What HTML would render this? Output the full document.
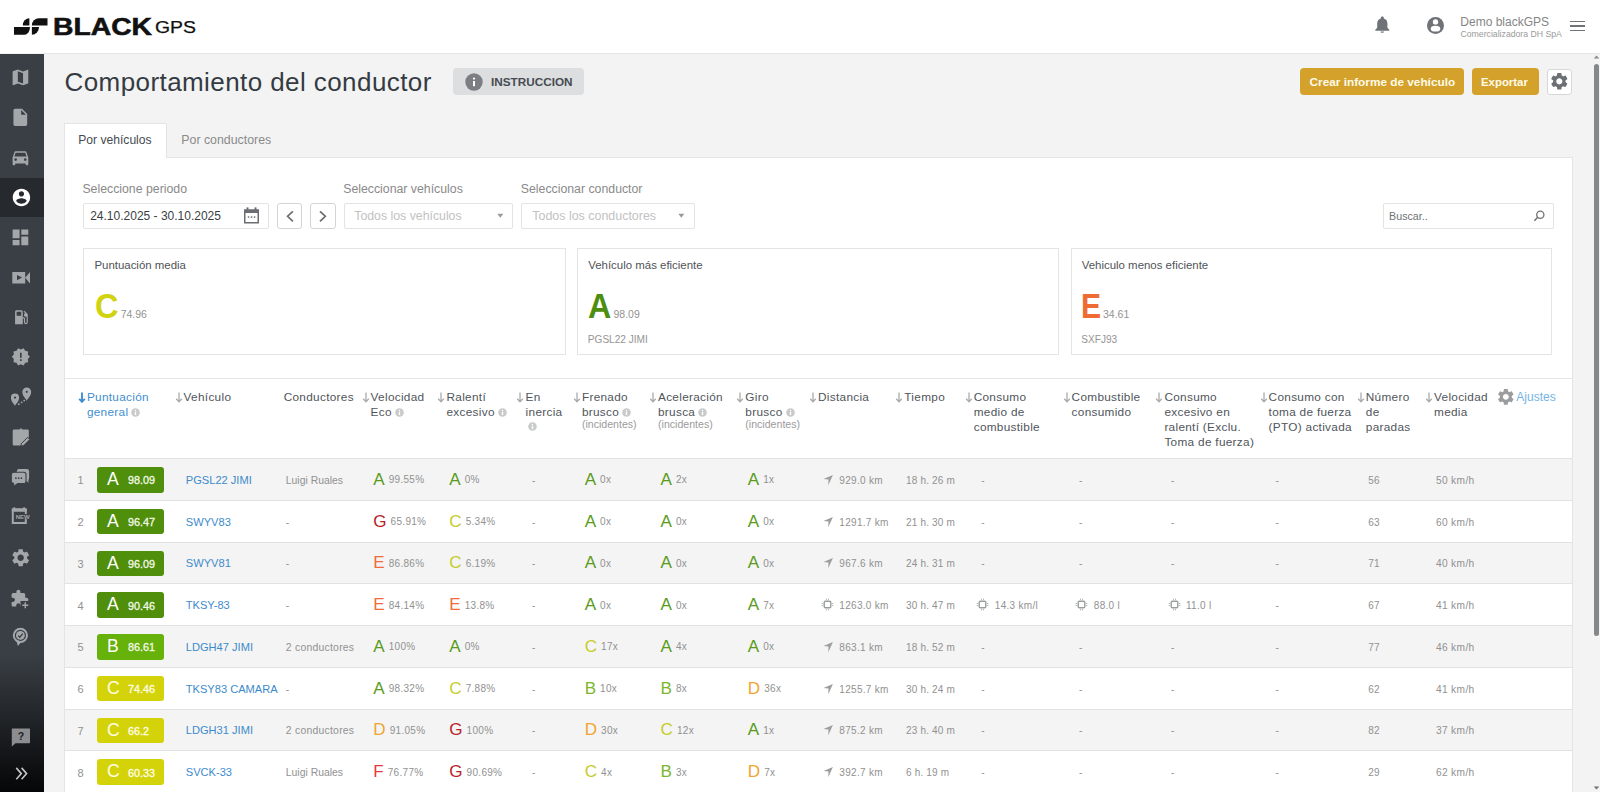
<!DOCTYPE html>
<html><head><meta charset="utf-8"><title>Comportamiento del conductor</title><style>
*{margin:0;padding:0}
html,body{width:1600px;height:792px;overflow:hidden;background:#f3f3f3;font-family:"Liberation Sans", sans-serif;}
.r{position:absolute;display:block}
.t{position:absolute;white-space:nowrap;line-height:20px;height:20px;font-family:"Liberation Sans", sans-serif;}
.ii{display:inline-block;vertical-align:baseline;margin-left:3px;position:relative;top:0.5px}
</style></head>
<body>
<div class="r" style="left:0.00px;top:0.00px;width:1600.00px;height:53.00px;background:#fff;"></div>
<div class="r" style="left:44.00px;top:53.00px;width:1556.00px;height:1.00px;background:#e6e6e6;"></div>
<svg class="r" style="left:0.00px;top:0.00px;" width="60" height="50" viewBox="0 0 60 50"><g fill="#111"><path d="M22.8 25.4 A6.6 7.15 0 0 1 29.4 18.25 L29.4 25.4 Z"/><path d="M14 27 L30 27 A5.6 7.8 0 0 1 24.4 34.8 L14 34.8 Z"/><path d="M31.9 25.4 A7.1 7.15 0 0 1 39 18.25 L47.5 18.25 L47.5 25.4 Z"/><path d="M31.9 27 L39 27 A7.1 7.8 0 0 1 31.9 34.8 Z"/></g></svg>
<svg class="r" style="left:50.00px;top:10.00px;" width="150" height="30" viewBox="0 0 150 30"><text x="3" y="24.8" font-family="Liberation Sans" font-weight="bold" font-size="23.4" fill="#111" stroke="#111" stroke-width="0.55" textLength="99" lengthAdjust="spacingAndGlyphs">BLACK</text><text x="105" y="22.9" font-family="Liberation Sans" font-size="16" fill="#111" stroke="#111" stroke-width="0.25" textLength="41" lengthAdjust="spacingAndGlyphs">GPS</text></svg>
<svg class="r" style="left:1375.00px;top:16.40px;" width="15" height="17" viewBox="0 0 15 17"><path fill="#6f7276" d="M7.1 0.5c-0.8 0-1.3 0.6-1.3 1.3v0.6C3.4 3.0 2.2 5.0 2.2 7.5v4.3L0.3 13.7v1h14v-1l-1.9-1.9V7.5c0-2.5-1.2-4.5-3.6-5.1V1.8c0-0.7-0.5-1.3-1.3-1.3zM5.5 15.4c0 0.9 0.8 1.3 1.8 1.3s1.8-0.4 1.8-1.3z"/></svg>
<svg class="r" style="left:1427.00px;top:16.70px;" width="17" height="17" viewBox="0 0 17 17"><circle cx="8.5" cy="8.5" r="8.5" fill="#6f7276"/><circle cx="8.5" cy="4.9" r="2.7" fill="#fff"/><ellipse cx="8.5" cy="11.7" rx="4.8" ry="2.9" fill="#fff"/></svg>
<div class="t" style="left:1460.30px;top:11.54px;font-size:12px;color:#858585;">Demo blackGPS</div>
<div class="t" style="left:1460.50px;top:23.78px;font-size:8.7px;color:#9a9a9a;">Comercializadora DH SpA</div>
<div class="r" style="left:1570.00px;top:20.80px;width:15.00px;height:1.50px;background:#6f7276;"></div>
<div class="r" style="left:1570.00px;top:25.30px;width:15.00px;height:1.50px;background:#6f7276;"></div>
<div class="r" style="left:1570.00px;top:29.80px;width:15.00px;height:1.50px;background:#6f7276;"></div>
<div class="r" style="left:0.00px;top:54.00px;width:44.00px;height:738.00px;background:linear-gradient(to bottom,#3a3f45 0px,#3a3f45 600px,#050607 738px);"></div>
<div class="r" style="left:0.00px;top:177.50px;width:44.00px;height:39.50px;background:#262a2e;"></div>
<svg class="r" style="left:10.29px;top:67.10px;" width="20.88" height="20.88" viewBox="0 0 24 24"><path fill="#a4a7aa" d="M20.5 3l-.16.03L15 5.1 9 3 3.36 4.9c-.21.07-.36.25-.36.48V20.5c0 .28.22.5.5.5l.16-.03L9 18.9l6 2.1 5.64-1.9c.21-.07.36-.25.36-.48V3.5c0-.28-.22-.5-.5-.5zM15 19l-6-2.11V5l6 2.11V19z"/></svg>
<svg class="r" style="left:10.42px;top:107.26px;" width="20.64" height="20.64" viewBox="0 0 24 24"><path fill="#a4a7aa" d="M6 2c-1.1 0-1.99.9-1.99 2L4 20c0 1.1.89 2 1.99 2H18c1.1 0 2-.9 2-2V8l-6-6H6zm7 7V3.5L18.5 9H13z"/></svg>
<svg class="r" style="left:10.29px;top:147.05px;" width="20.88" height="20.88" viewBox="0 0 24 24"><path fill="#a4a7aa" d="M18.92 6.01C18.72 5.42 18.16 5 17.5 5h-11c-.66 0-1.21.42-1.42 1.01L3 12v8c0 .55.45 1 1 1h1c.55 0 1-.45 1-1v-1h12v1c0 .55.45 1 1 1h1c.55 0 1-.45 1-1v-8l-2.08-5.99zM6.5 16c-.83 0-1.5-.67-1.5-1.5S5.670 13 6.5 13s1.5.67 1.5 1.5S7.33 16 6.5 16zm11 0c-.83 0-1.5-.67-1.5-1.5s.67-1.5 1.5-1.5 1.5.67 1.5 1.5-.67 1.5-1.5 1.5zM5 11l1.5-4.5h11L19 11H5z"/></svg>
<svg class="r" style="left:10.66px;top:186.76px;" width="20.88" height="20.88" viewBox="0 0 24 24"><path fill="#ffffff" d="M12 2C6.48 2 2 6.48 2 12s4.48 10 10 10 10-4.48 10-10S17.52 2 12 2zm0 3c1.66 0 3 1.34 3 3s-1.34 3-3 3-3-1.34-3-3 1.34-3 3-3zm0 14.2c-2.5 0-4.71-1.28-6-3.220.03-1.99 4-3.08 6-3.08 1.99 0 5.97 1.09 6 3.08-1.29 1.94-3.5 3.22-6 3.22z"/></svg>
<svg class="r" style="left:10.29px;top:227.19px;" width="20.88" height="20.88" viewBox="0 0 24 24"><path fill="#a4a7aa" d="M3 13h8V3H3v10zm0 8h8v-6H3v6zm10 0h8V11h-8v10zm0-18v6h8V3h-8z"/></svg>
<svg class="r" style="left:0.00px;top:260.00px;" width="44" height="30" viewBox="0 0 44 30"><path fill="#a4a7aa" d="M12.3 12H25.2V23.4H12.3Z M25.2 17.7 L30 12 V23.4 Z"/><path fill="#3a3f45" d="M17 15 L22 17.6 L17 20.2Z"/></svg>
<svg class="r" style="left:11.50px;top:308.10px;" width="18.48" height="18.48" viewBox="0 0 24 24"><path fill="#a4a7aa" d="M19.77 7.23l.01-.01-3.72-3.72L15 4.56l2.11 2.11c-.94.36-1.61 1.26-1.61 2.33 0 1.38 1.12 2.5 2.5 2.5.36 0 .69-.08 1-.21v7.21c0 .55-.45 1-1 1s-1-.45-1-1V14c0-1.1-.9-2-2-2h-1V5c0-1.1-.9-2-2-2H6c-1.1 0-2 .9-2 2v16h10v-7.5h1.5v5c0 1.38 1.12 2.5 2.5 2.5s2.5-1.12 2.5-2.5V9c0-.69-.28-1.32-.73-1.77zM12 10H6V5h6v5z"/></svg>
<svg class="r" style="left:11.08px;top:347.24px;" width="19.68" height="19.68" viewBox="0 0 24 24"><path fill="#a4a7aa" d="M23 12l-2.44-2.78.34-3.68-3.61-.82-1.89-3.18L12 3 8.6 1.54 6.71 4.72l-3.61.81.34 3.68L1 12l2.44 2.78-.34 3.69 3.61.82 1.89 3.18L12 21l3.4 1.46 1.89-3.18 3.61-.82-.34-3.68L23 12zm-10 5h-2v-2h2v2zm0-4h-2V7h2v6z"/></svg>
<svg class="r" style="left:0.00px;top:380.00px;" width="44" height="30" viewBox="0 0 44 30"><path fill="#a4a7aa" d="M10.9 17.6 A4.1 4.1 0 1 1 19.1 17.6 C19.1 22.11 15.3 24.16 15 26.21 C14.7 24.16 10.9 22.11 10.9 17.6Z"/><circle cx="15" cy="17.6" r="1.1" fill="#3a3f45"/><path fill="#a4a7aa" d="M22.35 11.8 A4.4 4.4 0 1 1 31.15 11.8 C31.15 16.64 27.05 18.840000000000003 26.75 21.040000000000003 C26.45 18.840000000000003 22.35 16.64 22.35 11.8Z"/><circle cx="26.75" cy="11.8" r="1.1" fill="#3a3f45"/><g fill="#a4a7aa"><circle cx="18.8" cy="24.2" r="0.9"/><circle cx="21.6" cy="22.3" r="0.9"/><circle cx="24.2" cy="20.6" r="0.9"/></g></svg>
<svg class="r" style="left:0.00px;top:420.00px;" width="44" height="30" viewBox="0 0 44 30"><path fill="#a4a7aa" d="M12.7 10.8 Q12.7 9.5 14 9.5 H19.4 A1.6 1.6 0 0 1 22.4 9.5 H27.5 Q28.8 9.5 28.8 10.8 V17.5 L21 25.5 H14 Q12.7 25.5 12.7 24.2Z"/><path fill="#a4a7aa" stroke="#3a3f45" stroke-width="1" d="M21 26 L21.3 23.6 L27.6 17.3 L29.8 19.5 L23.5 25.8 Z"/></svg>
<svg class="r" style="left:0.00px;top:460.00px;" width="44" height="30" viewBox="0 0 44 30"><rect x="16.8" y="9.1" width="12.3" height="11.2" rx="2.2" fill="#a4a7aa"/><path d="M25 20 L28.6 22.8 L28.2 19Z" fill="#a4a7aa"/><path d="M14.3 12.2 H23.9 Q26 12.2 26 14.3 V21.4 Q26 23.5 23.9 23.5 H17.6 L13.6 26.6 V23.3 Q11.3 23 11.3 21.4 V14.3 Q11.3 12.2 14.3 12.2Z" fill="#a4a7aa" stroke="#3a3f45" stroke-width="1.1"/></svg>
<svg class="r" style="left:0.00px;top:470.00px;" width="44" height="20" viewBox="0 0 44 20"><g fill="#3a3f45"><circle cx="15.9" cy="8.2" r="0.85"/><circle cx="18.65" cy="8.2" r="0.85"/><circle cx="21.4" cy="8.2" r="0.85"/></g></svg>
<svg class="r" style="left:0.00px;top:500.00px;" width="44" height="30" viewBox="0 0 44 30"><path fill="none" stroke="#a4a7aa" stroke-width="2" d="M12.8 10.5 H25.8 V23.1 H12.8 Z"/><rect x="11.8" y="8.2" width="15" height="3.3" fill="#a4a7aa"/><rect x="13.6" y="7.2" width="1.6" height="2" fill="#a4a7aa"/><rect x="23.3" y="7.2" width="1.6" height="2" fill="#a4a7aa"/><rect x="15" y="14.1" width="15.5" height="5" fill="#3a3f45"/><text x="22.75" y="18.7" font-family="Liberation Sans" font-weight="bold" font-size="5.6" fill="#a4a7aa" text-anchor="middle" textLength="14" lengthAdjust="spacingAndGlyphs">NEW</text></svg>
<svg class="r" style="left:10.20px;top:546.70px;" width="21.36" height="21.36" viewBox="0 0 24 24"><path fill="#a4a7aa" d="M19.14 12.94c.04-.3.06-.61.06-.94 0-.32-.02-.64-.07-.94l2.03-1.58c.18-.14.23-.41.12-.61l-1.92-3.32c-.12-.22-.37-.29-.59-.22l-2.39.96c-.5-.38-1.03-.7-1.62-.94l-.36-2.54c-.04-.24-.24-.41-.48-.41h-3.84c-.24 0-.43.17-.47.41l-.36 2.54c-.59.24-1.13.57-1.620.94l-2.39-.96c-.22-.08-.47 0-.59.22L2.74 8.87c-.12.21-.08.47.12.61l2.03 1.58c-.05.3-.09.63-.09.94s.02.64.07.94l-2.03 1.58c-.18.14-.23.41-.12.61l1.92 3.32c.12.22.37.29.59.22l2.39-.96c.5.38 1.03.7 1.62.94l.36 2.54c.05.24.24.41.48.41h3.84c.24 0 .44-.17.47-.41l.36-2.54c.59-.24 1.13-.56 1.62-.94l2.39.96c.22.08.47 0 .59-.22l1.92-3.32c.12-.22.07-.47-.12-.61l-2.01-1.58zM12 15.6c-1.98 0-3.6-1.62-3.6-3.6s1.62-3.6 3.6-3.6 3.6 1.62 3.6 3.6-1.62 3.6-3.6 3.6z"/></svg>
<svg class="r" style="left:10.46px;top:589.40px;" width="19.2" height="19.2" viewBox="0 0 24 24"><path fill="#a4a7aa" d="M20.5 11H19V7c0-1.1-.9-2-2-2h-4V3.5C13 2.12 11.88 1 10.5 1S8 2.12 8 3.5V5H4c-1.1 0-1.99.9-1.99 2v3.8H3.5c1.49 0 2.7 1.21 2.7 2.7s-1.21 2.7-2.7 2.7H2V20c0 1.1.9 2 2 2h3.8v-1.5c0-1.49 1.21-2.7 2.7-2.7 1.49 0 2.7 1.21 2.7 2.7V22H17c1.1 0 2-.9 2-2v-4h1.5c1.38 0 2.5-1.12 2.5-2.5S21.880 11 20.5 11z"/></svg>
<svg class="r" style="left:0.00px;top:590.00px;" width="44" height="20" viewBox="0 0 44 20"><rect x="20.5" y="11" width="10" height="9" fill="#3a3f45"/><path stroke="#a4a7aa" stroke-width="1.4" d="M25.3 12.3 V18.3 M22.3 15.3 H28.3"/></svg>
<svg class="r" style="left:0.00px;top:620.00px;" width="44" height="30" viewBox="0 0 44 30"><circle cx="20.4" cy="15.4" r="6.6" fill="none" stroke="#a4a7aa" stroke-width="2"/><circle cx="20.4" cy="15.4" r="4.4" fill="#a4a7aa"/><path d="M16 19.8 L17.9 26 L21.5 21.8Z" fill="#a4a7aa"/><path d="M18.2 15.6 L19.8 17.2 L22.8 13.6" fill="none" stroke="#3a3f45" stroke-width="1.3"/></svg>
<svg class="r" style="left:0.00px;top:720.00px;" width="44" height="30" viewBox="0 0 44 30"><path fill="#8c8d8f" d="M12.5 8.6 H29.3 Q30 8.6 30 9.3 V22.5 Q30 23.2 29.3 23.2 H15.5 L11.8 26.4 V9.3 Q11.8 8.6 12.5 8.6Z"/><text x="21" y="20.3" font-family="Liberation Sans" font-weight="bold" font-size="10.5" fill="#1d2023" text-anchor="middle">?</text></svg>
<svg class="r" style="left:0.00px;top:760.00px;" width="44" height="24" viewBox="0 0 44 24"><path fill="none" stroke="#c4c4c4" stroke-width="1.6" d="M16.3 7.9 L21.3 13.6 L16.3 19.3 M21.6 7.9 L26.6 13.6 L21.6 19.3"/></svg>
<div class="r" style="left:44.00px;top:54.00px;width:1556.00px;height:738.00px;background:#f3f3f3;"></div>
<div class="t" style="left:64.50px;top:71.79px;font-size:26px;color:#343b43;letter-spacing:0.42px;">Comportamiento del conductor</div>
<div class="r" style="left:453.30px;top:68.20px;width:130.50px;height:26.60px;background:#dcdee0;border-radius:4px;"></div>
<svg class="r" style="left:465.00px;top:72.50px;" width="18" height="18" viewBox="0 0 18 18"><circle cx="9" cy="9" r="8.7" fill="#7b7f83"/><rect x="8" y="8" width="2" height="5.2" fill="#fff"/><circle cx="9" cy="5.6" r="1.15" fill="#fff"/></svg>
<div class="t" style="left:491.00px;top:71.93px;font-size:11.75px;color:#474c52;font-weight:bold;">INSTRUCCION</div>
<div class="r" style="left:1300.20px;top:68.00px;width:164.30px;height:27.00px;background:#d4a12b;border-radius:4px;"></div>
<div class="t" style="left:1309.60px;top:71.91px;font-size:11.8px;color:#fffbe8;font-weight:bold;">Crear informe de vehículo</div>
<div class="r" style="left:1471.50px;top:68.00px;width:67.30px;height:27.00px;background:#d4a12b;border-radius:4px;"></div>
<div class="t" style="left:1481.00px;top:72.05px;font-size:11.4px;color:#fffbe8;font-weight:bold;">Exportar</div>
<div class="r" style="left:1546.50px;top:68.50px;width:25.00px;height:26.00px;background:#fff;border:1px solid #d5d7d9;border-radius:3px;box-sizing:border-box;"></div>
<svg class="r" style="left:1548.80px;top:71.10px;" width="20.64" height="20.64" viewBox="0 0 24 24"><path fill="#6c7075" d="M19.14 12.94c.04-.3.06-.61.06-.94 0-.32-.02-.64-.07-.94l2.03-1.58c.18-.14.23-.41.12-.61l-1.92-3.32c-.12-.22-.37-.29-.59-.22l-2.39.96c-.5-.38-1.03-.7-1.62-.94l-.36-2.54c-.04-.24-.24-.41-.48-.41h-3.84c-.24 0-.43.17-.47.41l-.36 2.54c-.59.24-1.13.57-1.620.94l-2.39-.96c-.22-.08-.47 0-.59.22L2.74 8.87c-.12.21-.08.47.12.61l2.03 1.58c-.05.3-.09.63-.09.94s.02.64.07.94l-2.03 1.58c-.18.14-.23.41-.12.61l1.92 3.32c.12.22.37.29.59.22l2.39-.96c.5.38 1.03.7 1.62.94l.36 2.54c.05.24.24.41.48.41h3.84c.24 0 .44-.17.47-.41l.36-2.54c.59-.24 1.13-.56 1.62-.94l2.39.96c.22.08.47 0 .59-.22l1.92-3.32c.12-.22.07-.47-.12-.61l-2.01-1.58zM12 15.6c-1.98 0-3.6-1.62-3.6-3.6s1.62-3.6 3.6-3.6 3.6 1.62 3.6 3.6-1.62 3.6-3.6 3.6z"/></svg>
<svg class="r" style="left:1588.00px;top:54.00px;" width="12" height="10" viewBox="0 0 12 10"><path d="M8.5 1.5 L11.3 4.5 H5.7Z" fill="#8a8c8f"/></svg>
<div class="r" style="left:1593.80px;top:63.50px;width:5.40px;height:572.50px;background:#85888b;border-radius:3px;"></div>
<svg class="r" style="left:1588.00px;top:780.00px;" width="12" height="12" viewBox="0 0 12 12"><path d="M5.7 6.5 H11.3 L8.5 9.5Z" fill="#6e7073"/></svg>
<div class="r" style="left:64.00px;top:157.00px;width:1508.50px;height:635.00px;background:#fff;border:1px solid #e4e4e4;border-bottom:none;box-sizing:border-box;"></div>
<div class="r" style="left:64.00px;top:122.50px;width:102.80px;height:35.50px;background:#fff;border:1px solid #e4e4e4;border-bottom:none;box-sizing:border-box;"></div>
<div class="t" style="left:78.30px;top:129.60px;font-size:12.1px;color:#454a50;">Por vehículos</div>
<div class="t" style="left:181.30px;top:129.52px;font-size:12.35px;color:#8a8a8a;">Por conductores</div>
<div class="t" style="left:82.40px;top:179.14px;font-size:12.3px;color:#8a8a8a;">Seleccione periodo</div>
<div class="t" style="left:343.20px;top:179.14px;font-size:12.3px;color:#8a8a8a;">Seleccionar vehículos</div>
<div class="t" style="left:520.80px;top:179.14px;font-size:12.3px;color:#8a8a8a;">Seleccionar conductor</div>
<div class="r" style="left:82.60px;top:202.50px;width:186.90px;height:26.00px;background:#fff;border:1px solid #e3e3e3;border-radius:2px;box-sizing:border-box;"></div>
<div class="t" style="left:90.20px;top:205.84px;font-size:12px;color:#3b3f44;">24.10.2025 - 30.10.2025</div>
<svg class="r" style="left:243.00px;top:206.00px;" width="18" height="19" viewBox="0 0 18 19"><path fill="#6a6d71" d="M1 3.2 H16 V17.6 H1Z M2.5 7 V16.1 H14.5 V7Z"/><rect x="3.5" y="1.4" width="2" height="2.4" fill="#6a6d71"/><rect x="11.5" y="1.4" width="2" height="2.4" fill="#6a6d71"/><g fill="#6a6d71"><rect x="4.8" y="10.3" width="1.5" height="1.5"/><rect x="7.8" y="10.3" width="1.5" height="1.5"/><rect x="10.8" y="10.3" width="1.5" height="1.5"/></g></svg>
<div class="r" style="left:276.50px;top:202.50px;width:25.90px;height:26.00px;background:#fff;border:1px solid #d2d4d6;border-radius:3px;box-sizing:border-box;"></div>
<div class="r" style="left:310.00px;top:202.50px;width:26.00px;height:26.00px;background:#fff;border:1px solid #d2d4d6;border-radius:3px;box-sizing:border-box;"></div>
<svg class="r" style="left:276.50px;top:202.50px;" width="26" height="26" viewBox="0 0 26 26"><path d="M15.9 8.3 L10.6 13.25 L15.9 18.3" fill="none" stroke="#6a6c6f" stroke-width="1.7"/></svg>
<svg class="r" style="left:310.00px;top:202.50px;" width="26" height="26" viewBox="0 0 26 26"><path d="M10 8.3 L15.3 13.25 L10 18.3" fill="none" stroke="#6a6c6f" stroke-width="1.7"/></svg>
<div class="r" style="left:343.60px;top:202.50px;width:169.90px;height:26.00px;background:#fff;border:1px solid #e3e3e3;border-radius:2px;box-sizing:border-box;"></div>
<div class="t" style="left:354.30px;top:205.74px;font-size:12.3px;color:#c2c2c2;">Todos los vehículos</div>
<svg class="r" style="left:494.00px;top:211.20px;" width="12" height="10" viewBox="0 0 12 10"><path d="M3.3 2.7 H9.3 L6.3 6.8Z" fill="#9a9a9a"/></svg>
<div class="r" style="left:521.20px;top:202.50px;width:173.40px;height:26.00px;background:#fff;border:1px solid #e3e3e3;border-radius:2px;box-sizing:border-box;"></div>
<div class="t" style="left:532.30px;top:205.68px;font-size:12.45px;color:#c2c2c2;">Todos los conductores</div>
<svg class="r" style="left:675.00px;top:211.20px;" width="12" height="10" viewBox="0 0 12 10"><path d="M3.3 2.7 H9.3 L6.3 6.8Z" fill="#9a9a9a"/></svg>
<div class="r" style="left:1383.10px;top:202.50px;width:170.60px;height:26.00px;background:#fff;border:1px solid #e3e3e3;border-radius:2px;box-sizing:border-box;"></div>
<div class="t" style="left:1389.10px;top:205.59px;font-size:10.7px;color:#6f7276;">Buscar..</div>
<svg class="r" style="left:1532.00px;top:208.00px;" width="15" height="15" viewBox="0 0 15 15"><circle cx="8.3" cy="6.7" r="3.6" fill="none" stroke="#6f7276" stroke-width="1.3"/><path d="M5.7 9.3 L2.4 12.7" stroke="#6f7276" stroke-width="1.5"/></svg>
<div class="r" style="left:83.30px;top:247.90px;width:483.10px;height:106.70px;border:1px solid #e4e4e4;box-sizing:border-box;background:#fff;"></div>
<div class="t" style="left:94.40px;top:255.03px;font-size:11.45px;color:#4f5358;">Puntuación media</div>
<div class="t" style="left:94.90px;top:295.87px;font-size:35px;font-weight:bold;color:#d0d30f;transform:scaleX(0.93);transform-origin:0 0;">C</div>
<div class="t" style="left:120.70px;top:304.06px;font-size:10.5px;color:#939393;">74.96</div>
<div class="r" style="left:577.10px;top:247.90px;width:482.30px;height:106.70px;border:1px solid #e4e4e4;box-sizing:border-box;background:#fff;"></div>
<div class="t" style="left:588.20px;top:255.03px;font-size:11.45px;color:#4f5358;">Vehículo más eficiente</div>
<div class="t" style="left:587.90px;top:295.87px;font-size:35px;font-weight:bold;color:#4e8e0e;transform:scaleX(0.92);transform-origin:0 0;">A</div>
<div class="t" style="left:613.50px;top:304.06px;font-size:10.5px;color:#939393;">98.09</div>
<div class="t" style="left:587.80px;top:329.90px;font-size:10.1px;color:#949494;">PGSL22 JIMI</div>
<div class="r" style="left:1070.60px;top:247.90px;width:481.90px;height:106.70px;border:1px solid #e4e4e4;box-sizing:border-box;background:#fff;"></div>
<div class="t" style="left:1081.70px;top:255.03px;font-size:11.45px;color:#4f5358;">Vehiculo menos eficiente</div>
<div class="t" style="left:1081.40px;top:295.87px;font-size:35px;font-weight:bold;color:#ee6b33;transform:scaleX(0.86);transform-origin:0 0;">E</div>
<div class="t" style="left:1103.00px;top:304.06px;font-size:10.5px;color:#939393;">34.61</div>
<div class="t" style="left:1081.30px;top:329.90px;font-size:10.1px;color:#949494;">SXFJ93</div>
<div class="r" style="left:65.00px;top:378.00px;width:1506.50px;height:1.00px;background:#e6e6e6;"></div>
<svg class="r" style="left:77.50px;top:391.50px;" width="8" height="11" viewBox="0 0 8 11"><path d="M4 0.5 V9.6 M1.2 6.8 L4 9.8 L6.8 6.8" fill="none" stroke="#3f8ecf" stroke-width="1.9"/></svg>
<div class="t" style="left:86.90px;top:387.21px;font-size:11.8px;color:#3f8ecf;letter-spacing:0.3px;">Puntuación</div>
<div class="t" style="left:86.90px;top:402.16px;font-size:11.8px;color:#3f8ecf;letter-spacing:0.3px;">general<svg class="ii" width="9" height="9" viewBox="0 0 9 9"><circle cx="4.5" cy="4.5" r="4.3" fill="#c9cacb"/><rect x="3.85" y="3.7" width="1.3" height="3.3" fill="#fff"/><circle cx="4.5" cy="2.45" r="0.72" fill="#fff"/></svg></div>
<svg class="r" style="left:175.00px;top:391.50px;" width="8" height="11" viewBox="0 0 8 11"><path d="M4 0.5 V9.6 M1.2 6.8 L4 9.8 L6.8 6.8" fill="none" stroke="#a9abad" stroke-width="1.3"/></svg>
<div class="t" style="left:183.60px;top:387.21px;font-size:11.8px;color:#50555b;letter-spacing:0.3px;">Vehículo</div>
<div class="t" style="left:283.70px;top:387.21px;font-size:11.8px;color:#50555b;letter-spacing:0.3px;">Conductores</div>
<svg class="r" style="left:361.90px;top:391.50px;" width="8" height="11" viewBox="0 0 8 11"><path d="M4 0.5 V9.6 M1.2 6.8 L4 9.8 L6.8 6.8" fill="none" stroke="#a9abad" stroke-width="1.3"/></svg>
<div class="t" style="left:370.60px;top:387.21px;font-size:11.8px;color:#50555b;letter-spacing:0.3px;">Velocidad</div>
<div class="t" style="left:370.60px;top:402.16px;font-size:11.8px;color:#50555b;letter-spacing:0.3px;">Eco<svg class="ii" width="9" height="9" viewBox="0 0 9 9"><circle cx="4.5" cy="4.5" r="4.3" fill="#c9cacb"/><rect x="3.85" y="3.7" width="1.3" height="3.3" fill="#fff"/><circle cx="4.5" cy="2.45" r="0.72" fill="#fff"/></svg></div>
<svg class="r" style="left:437.40px;top:391.50px;" width="8" height="11" viewBox="0 0 8 11"><path d="M4 0.5 V9.6 M1.2 6.8 L4 9.8 L6.8 6.8" fill="none" stroke="#a9abad" stroke-width="1.3"/></svg>
<div class="t" style="left:446.50px;top:387.21px;font-size:11.8px;color:#50555b;letter-spacing:0.3px;">Ralentí</div>
<div class="t" style="left:446.50px;top:402.16px;font-size:11.8px;color:#50555b;letter-spacing:0.3px;">excesivo<svg class="ii" width="9" height="9" viewBox="0 0 9 9"><circle cx="4.5" cy="4.5" r="4.3" fill="#c9cacb"/><rect x="3.85" y="3.7" width="1.3" height="3.3" fill="#fff"/><circle cx="4.5" cy="2.45" r="0.72" fill="#fff"/></svg></div>
<svg class="r" style="left:516.20px;top:391.50px;" width="8" height="11" viewBox="0 0 8 11"><path d="M4 0.5 V9.6 M1.2 6.8 L4 9.8 L6.8 6.8" fill="none" stroke="#a9abad" stroke-width="1.3"/></svg>
<div class="t" style="left:525.60px;top:387.21px;font-size:11.8px;color:#50555b;letter-spacing:0.3px;">En</div>
<div class="t" style="left:525.60px;top:402.16px;font-size:11.8px;color:#50555b;letter-spacing:0.3px;">inercia</div>
<svg class="r" style="left:527.50px;top:422.30px;" width="9" height="9" viewBox="0 0 9 9"><circle cx="4.5" cy="4.5" r="4.3" fill="#c9cacb"/><rect x="3.85" y="3.7" width="1.3" height="3.3" fill="#fff"/><circle cx="4.5" cy="2.45" r="0.72" fill="#fff"/></svg>
<svg class="r" style="left:573.00px;top:391.50px;" width="8" height="11" viewBox="0 0 8 11"><path d="M4 0.5 V9.6 M1.2 6.8 L4 9.8 L6.8 6.8" fill="none" stroke="#a9abad" stroke-width="1.3"/></svg>
<div class="t" style="left:581.90px;top:387.21px;font-size:11.8px;color:#50555b;letter-spacing:0.3px;">Frenado</div>
<div class="t" style="left:581.90px;top:402.16px;font-size:11.8px;color:#50555b;letter-spacing:0.3px;">brusco<svg class="ii" width="9" height="9" viewBox="0 0 9 9"><circle cx="4.5" cy="4.5" r="4.3" fill="#c9cacb"/><rect x="3.85" y="3.7" width="1.3" height="3.3" fill="#fff"/><circle cx="4.5" cy="2.45" r="0.72" fill="#fff"/></svg></div>
<div class="t" style="left:581.90px;top:414.12px;font-size:10.6px;color:#9b9b9b;">(incidentes)</div>
<svg class="r" style="left:648.80px;top:391.50px;" width="8" height="11" viewBox="0 0 8 11"><path d="M4 0.5 V9.6 M1.2 6.8 L4 9.8 L6.8 6.8" fill="none" stroke="#a9abad" stroke-width="1.3"/></svg>
<div class="t" style="left:658.00px;top:387.21px;font-size:11.8px;color:#50555b;letter-spacing:0.3px;">Aceleración</div>
<div class="t" style="left:658.00px;top:402.16px;font-size:11.8px;color:#50555b;letter-spacing:0.3px;">brusca<svg class="ii" width="9" height="9" viewBox="0 0 9 9"><circle cx="4.5" cy="4.5" r="4.3" fill="#c9cacb"/><rect x="3.85" y="3.7" width="1.3" height="3.3" fill="#fff"/><circle cx="4.5" cy="2.45" r="0.72" fill="#fff"/></svg></div>
<div class="t" style="left:658.00px;top:414.12px;font-size:10.6px;color:#9b9b9b;">(incidentes)</div>
<svg class="r" style="left:736.30px;top:391.50px;" width="8" height="11" viewBox="0 0 8 11"><path d="M4 0.5 V9.6 M1.2 6.8 L4 9.8 L6.8 6.8" fill="none" stroke="#a9abad" stroke-width="1.3"/></svg>
<div class="t" style="left:745.30px;top:387.21px;font-size:11.8px;color:#50555b;letter-spacing:0.3px;">Giro</div>
<div class="t" style="left:745.30px;top:402.16px;font-size:11.8px;color:#50555b;letter-spacing:0.3px;">brusco<svg class="ii" width="9" height="9" viewBox="0 0 9 9"><circle cx="4.5" cy="4.5" r="4.3" fill="#c9cacb"/><rect x="3.85" y="3.7" width="1.3" height="3.3" fill="#fff"/><circle cx="4.5" cy="2.45" r="0.72" fill="#fff"/></svg></div>
<div class="t" style="left:745.30px;top:414.12px;font-size:10.6px;color:#9b9b9b;">(incidentes)</div>
<svg class="r" style="left:809.00px;top:391.50px;" width="8" height="11" viewBox="0 0 8 11"><path d="M4 0.5 V9.6 M1.2 6.8 L4 9.8 L6.8 6.8" fill="none" stroke="#a9abad" stroke-width="1.3"/></svg>
<div class="t" style="left:818.00px;top:387.21px;font-size:11.8px;color:#50555b;letter-spacing:0.3px;">Distancia</div>
<svg class="r" style="left:895.30px;top:391.50px;" width="8" height="11" viewBox="0 0 8 11"><path d="M4 0.5 V9.6 M1.2 6.8 L4 9.8 L6.8 6.8" fill="none" stroke="#a9abad" stroke-width="1.3"/></svg>
<div class="t" style="left:904.30px;top:387.21px;font-size:11.8px;color:#50555b;letter-spacing:0.3px;">Tiempo</div>
<svg class="r" style="left:964.60px;top:391.50px;" width="8" height="11" viewBox="0 0 8 11"><path d="M4 0.5 V9.6 M1.2 6.8 L4 9.8 L6.8 6.8" fill="none" stroke="#a9abad" stroke-width="1.3"/></svg>
<div class="t" style="left:973.70px;top:387.21px;font-size:11.8px;color:#50555b;letter-spacing:0.3px;">Consumo</div>
<div class="t" style="left:973.70px;top:402.16px;font-size:11.8px;color:#50555b;letter-spacing:0.3px;">medio de</div>
<div class="t" style="left:973.70px;top:417.11px;font-size:11.8px;color:#50555b;letter-spacing:0.3px;">combustible</div>
<svg class="r" style="left:1062.50px;top:391.50px;" width="8" height="11" viewBox="0 0 8 11"><path d="M4 0.5 V9.6 M1.2 6.8 L4 9.8 L6.8 6.8" fill="none" stroke="#a9abad" stroke-width="1.3"/></svg>
<div class="t" style="left:1071.60px;top:387.21px;font-size:11.8px;color:#50555b;letter-spacing:0.3px;">Combustible</div>
<div class="t" style="left:1071.60px;top:402.16px;font-size:11.8px;color:#50555b;letter-spacing:0.3px;">consumido</div>
<svg class="r" style="left:1155.30px;top:391.50px;" width="8" height="11" viewBox="0 0 8 11"><path d="M4 0.5 V9.6 M1.2 6.8 L4 9.8 L6.8 6.8" fill="none" stroke="#a9abad" stroke-width="1.3"/></svg>
<div class="t" style="left:1164.40px;top:387.21px;font-size:11.8px;color:#50555b;letter-spacing:0.3px;">Consumo</div>
<div class="t" style="left:1164.40px;top:402.16px;font-size:11.8px;color:#50555b;letter-spacing:0.3px;">excesivo en</div>
<div class="t" style="left:1164.40px;top:417.11px;font-size:11.8px;color:#50555b;letter-spacing:0.3px;">ralentí (Exclu.</div>
<div class="t" style="left:1164.40px;top:432.06px;font-size:11.8px;color:#50555b;letter-spacing:0.3px;">Toma de fuerza)</div>
<svg class="r" style="left:1260.00px;top:391.50px;" width="8" height="11" viewBox="0 0 8 11"><path d="M4 0.5 V9.6 M1.2 6.8 L4 9.8 L6.8 6.8" fill="none" stroke="#a9abad" stroke-width="1.3"/></svg>
<div class="t" style="left:1268.60px;top:387.21px;font-size:11.8px;color:#50555b;letter-spacing:0.3px;">Consumo con</div>
<div class="t" style="left:1268.60px;top:402.16px;font-size:11.8px;color:#50555b;letter-spacing:0.3px;">toma de fuerza</div>
<div class="t" style="left:1268.60px;top:417.11px;font-size:11.8px;color:#50555b;letter-spacing:0.3px;">(PTO) activada</div>
<svg class="r" style="left:1356.80px;top:391.50px;" width="8" height="11" viewBox="0 0 8 11"><path d="M4 0.5 V9.6 M1.2 6.8 L4 9.8 L6.8 6.8" fill="none" stroke="#a9abad" stroke-width="1.3"/></svg>
<div class="t" style="left:1365.80px;top:387.21px;font-size:11.8px;color:#50555b;letter-spacing:0.3px;">Número</div>
<div class="t" style="left:1365.80px;top:402.16px;font-size:11.8px;color:#50555b;letter-spacing:0.3px;">de</div>
<div class="t" style="left:1365.80px;top:417.11px;font-size:11.8px;color:#50555b;letter-spacing:0.3px;">paradas</div>
<svg class="r" style="left:1425.00px;top:391.50px;" width="8" height="11" viewBox="0 0 8 11"><path d="M4 0.5 V9.6 M1.2 6.8 L4 9.8 L6.8 6.8" fill="none" stroke="#a9abad" stroke-width="1.3"/></svg>
<div class="t" style="left:1434.00px;top:387.21px;font-size:11.8px;color:#50555b;letter-spacing:0.3px;">Velocidad</div>
<div class="t" style="left:1434.00px;top:402.16px;font-size:11.8px;color:#50555b;letter-spacing:0.3px;">media</div>
<svg class="r" style="left:1495.90px;top:387.20px;" width="19.68" height="19.68" viewBox="0 0 24 24"><path fill="#9a9c9e" d="M19.14 12.94c.04-.3.06-.61.06-.94 0-.32-.02-.64-.07-.94l2.03-1.58c.18-.14.23-.41.12-.61l-1.92-3.32c-.12-.22-.37-.29-.59-.22l-2.39.96c-.5-.38-1.03-.7-1.62-.94l-.36-2.54c-.04-.24-.24-.41-.48-.41h-3.84c-.24 0-.43.17-.47.41l-.36 2.54c-.59.24-1.13.57-1.620.94l-2.39-.96c-.22-.08-.47 0-.59.22L2.74 8.87c-.12.21-.08.47.12.61l2.03 1.58c-.05.3-.09.63-.09.94s.02.64.07.94l-2.03 1.58c-.18.14-.23.41-.12.61l1.92 3.32c.12.22.37.29.59.22l2.39-.96c.5.38 1.03.7 1.62.94l.36 2.54c.05.24.24.41.48.41h3.84c.24 0 .44-.17.47-.41l.36-2.54c.59-.24 1.13-.56 1.62-.94l2.39.96c.22.08.47 0 .59-.22l1.92-3.32c.12-.22.07-.47-.12-.61l-2.01-1.58zM12 15.6c-1.98 0-3.6-1.62-3.6-3.6s1.62-3.6 3.6-3.6 3.6 1.62 3.6 3.6-1.62 3.6-3.6 3.6z"/></svg>
<div class="t" style="left:1516.30px;top:386.74px;font-size:12px;color:#74b4e3;">Ajustes</div>
<div class="r" style="left:65.00px;top:458.20px;width:1506.50px;height:41.75px;background:#f4f4f4;border-top:1px solid #e2e2e2;box-sizing:border-box;"></div>
<div class="t" style="left:77.60px;top:470.49px;font-size:11px;color:#919191;">1</div>
<div class="r" style="left:97.10px;top:467.00px;width:66.60px;height:25.60px;background:#4f8f0b;border-radius:3px;"></div>
<div class="t" style="left:107.00px;top:469.20px;font-size:17.6px;color:#ffffff;">A</div>
<div class="t" style="left:128.10px;top:470.26px;font-size:10.8px;color:#f3f8e6;-webkit-text-stroke:0.3px #f3f8e6;">98.09</div>
<div class="t" style="left:185.80px;top:469.85px;font-size:11.1px;color:#3d8bcb;">PGSL22 JIMI</div>
<div class="t" style="left:285.80px;top:470.99px;font-size:10.4px;color:#919191;">Luigi Ruales</div>
<div class="t" style="left:373.30px;top:469.87px;font-size:17.1px;color:#5a9b1c;">A<span style="font-size:10.0px;color:#919191;margin-left:4px;letter-spacing:0.3px;position:relative;top:-1.5px;">99.55%</span></div>
<div class="t" style="left:449.30px;top:469.87px;font-size:17.1px;color:#5a9b1c;">A<span style="font-size:10.0px;color:#919191;margin-left:4px;letter-spacing:0.3px;position:relative;top:-1.5px;">0%</span></div>
<div class="t" style="left:532.00px;top:470.83px;font-size:10.0px;color:#919191;">-</div>
<div class="t" style="left:584.70px;top:469.87px;font-size:17.1px;color:#5a9b1c;">A<span style="font-size:10.0px;color:#919191;margin-left:4px;letter-spacing:0.3px;position:relative;top:-1.5px;">0x</span></div>
<div class="t" style="left:660.60px;top:469.87px;font-size:17.1px;color:#5a9b1c;">A<span style="font-size:10.0px;color:#919191;margin-left:4px;letter-spacing:0.3px;position:relative;top:-1.5px;">2x</span></div>
<div class="t" style="left:747.80px;top:469.87px;font-size:17.1px;color:#5a9b1c;">A<span style="font-size:10.0px;color:#919191;margin-left:4px;letter-spacing:0.3px;position:relative;top:-1.5px;">1x</span></div>
<svg class="r" style="left:823.00px;top:473.80px;" width="11" height="12" viewBox="0 0 11 12"><path d="M9.9 1.0 L0.5 5.0 L5.5 5.6 L5.3 11.2 Z" fill="#9b9d9f"/></svg>
<div class="t" style="left:839.30px;top:470.83px;font-size:10.0px;color:#919191;letter-spacing:0.3px;">929.0 km</div>
<div class="t" style="left:906.00px;top:470.83px;font-size:10.0px;color:#919191;letter-spacing:0.18px;">18 h. 26 m</div>
<div class="t" style="left:981.30px;top:470.83px;font-size:10.0px;color:#919191;">-</div>
<div class="t" style="left:1079.10px;top:470.83px;font-size:10.0px;color:#919191;">-</div>
<div class="t" style="left:1171.10px;top:470.83px;font-size:10.0px;color:#919191;">-</div>
<div class="t" style="left:1275.60px;top:470.83px;font-size:10.0px;color:#919191;">-</div>
<div class="t" style="left:1368.20px;top:470.83px;font-size:10.0px;color:#919191;letter-spacing:0.3px;">56</div>
<div class="t" style="left:1435.90px;top:470.76px;font-size:10.2px;color:#919191;letter-spacing:0.35px;">50 km/h</div>
<div class="r" style="left:65.00px;top:499.95px;width:1506.50px;height:41.75px;background:#fff;border-top:1px solid #e2e2e2;box-sizing:border-box;"></div>
<div class="t" style="left:77.60px;top:512.24px;font-size:11px;color:#919191;">2</div>
<div class="r" style="left:97.10px;top:508.75px;width:66.60px;height:25.60px;background:#4f8f0b;border-radius:3px;"></div>
<div class="t" style="left:107.00px;top:510.95px;font-size:17.6px;color:#ffffff;">A</div>
<div class="t" style="left:128.10px;top:512.01px;font-size:10.8px;color:#f3f8e6;-webkit-text-stroke:0.3px #f3f8e6;">96.47</div>
<div class="t" style="left:185.80px;top:511.60px;font-size:11.1px;color:#3d8bcb;">SWYV83</div>
<div class="t" style="left:285.80px;top:512.74px;font-size:10.4px;color:#919191;">-</div>
<div class="t" style="left:373.30px;top:511.62px;font-size:17.1px;color:#b8232a;">G<span style="font-size:10.0px;color:#919191;margin-left:4px;letter-spacing:0.3px;position:relative;top:-1.5px;">65.91%</span></div>
<div class="t" style="left:449.30px;top:511.62px;font-size:17.1px;color:#c6cc2a;">C<span style="font-size:10.0px;color:#919191;margin-left:4px;letter-spacing:0.3px;position:relative;top:-1.5px;">5.34%</span></div>
<div class="t" style="left:532.00px;top:512.58px;font-size:10.0px;color:#919191;">-</div>
<div class="t" style="left:584.70px;top:511.62px;font-size:17.1px;color:#5a9b1c;">A<span style="font-size:10.0px;color:#919191;margin-left:4px;letter-spacing:0.3px;position:relative;top:-1.5px;">0x</span></div>
<div class="t" style="left:660.60px;top:511.62px;font-size:17.1px;color:#5a9b1c;">A<span style="font-size:10.0px;color:#919191;margin-left:4px;letter-spacing:0.3px;position:relative;top:-1.5px;">0x</span></div>
<div class="t" style="left:747.80px;top:511.62px;font-size:17.1px;color:#5a9b1c;">A<span style="font-size:10.0px;color:#919191;margin-left:4px;letter-spacing:0.3px;position:relative;top:-1.5px;">0x</span></div>
<svg class="r" style="left:823.00px;top:515.55px;" width="11" height="12" viewBox="0 0 11 12"><path d="M9.9 1.0 L0.5 5.0 L5.5 5.6 L5.3 11.2 Z" fill="#9b9d9f"/></svg>
<div class="t" style="left:839.30px;top:512.58px;font-size:10.0px;color:#919191;letter-spacing:0.3px;">1291.7 km</div>
<div class="t" style="left:906.00px;top:512.58px;font-size:10.0px;color:#919191;letter-spacing:0.18px;">21 h. 30 m</div>
<div class="t" style="left:981.30px;top:512.58px;font-size:10.0px;color:#919191;">-</div>
<div class="t" style="left:1079.10px;top:512.58px;font-size:10.0px;color:#919191;">-</div>
<div class="t" style="left:1171.10px;top:512.58px;font-size:10.0px;color:#919191;">-</div>
<div class="t" style="left:1275.60px;top:512.58px;font-size:10.0px;color:#919191;">-</div>
<div class="t" style="left:1368.20px;top:512.58px;font-size:10.0px;color:#919191;letter-spacing:0.3px;">63</div>
<div class="t" style="left:1435.90px;top:512.51px;font-size:10.2px;color:#919191;letter-spacing:0.35px;">60 km/h</div>
<div class="r" style="left:65.00px;top:541.70px;width:1506.50px;height:41.75px;background:#f4f4f4;border-top:1px solid #e2e2e2;box-sizing:border-box;"></div>
<div class="t" style="left:77.60px;top:553.99px;font-size:11px;color:#919191;">3</div>
<div class="r" style="left:97.10px;top:550.50px;width:66.60px;height:25.60px;background:#4f8f0b;border-radius:3px;"></div>
<div class="t" style="left:107.00px;top:552.70px;font-size:17.6px;color:#ffffff;">A</div>
<div class="t" style="left:128.10px;top:553.76px;font-size:10.8px;color:#f3f8e6;-webkit-text-stroke:0.3px #f3f8e6;">96.09</div>
<div class="t" style="left:185.80px;top:553.35px;font-size:11.1px;color:#3d8bcb;">SWYV81</div>
<div class="t" style="left:285.80px;top:554.49px;font-size:10.4px;color:#919191;">-</div>
<div class="t" style="left:373.30px;top:553.37px;font-size:17.1px;color:#ef6c3a;">E<span style="font-size:10.0px;color:#919191;margin-left:4px;letter-spacing:0.3px;position:relative;top:-1.5px;">86.86%</span></div>
<div class="t" style="left:449.30px;top:553.37px;font-size:17.1px;color:#c6cc2a;">C<span style="font-size:10.0px;color:#919191;margin-left:4px;letter-spacing:0.3px;position:relative;top:-1.5px;">6.19%</span></div>
<div class="t" style="left:532.00px;top:554.33px;font-size:10.0px;color:#919191;">-</div>
<div class="t" style="left:584.70px;top:553.37px;font-size:17.1px;color:#5a9b1c;">A<span style="font-size:10.0px;color:#919191;margin-left:4px;letter-spacing:0.3px;position:relative;top:-1.5px;">0x</span></div>
<div class="t" style="left:660.60px;top:553.37px;font-size:17.1px;color:#5a9b1c;">A<span style="font-size:10.0px;color:#919191;margin-left:4px;letter-spacing:0.3px;position:relative;top:-1.5px;">0x</span></div>
<div class="t" style="left:747.80px;top:553.37px;font-size:17.1px;color:#5a9b1c;">A<span style="font-size:10.0px;color:#919191;margin-left:4px;letter-spacing:0.3px;position:relative;top:-1.5px;">0x</span></div>
<svg class="r" style="left:823.00px;top:557.30px;" width="11" height="12" viewBox="0 0 11 12"><path d="M9.9 1.0 L0.5 5.0 L5.5 5.6 L5.3 11.2 Z" fill="#9b9d9f"/></svg>
<div class="t" style="left:839.30px;top:554.33px;font-size:10.0px;color:#919191;letter-spacing:0.3px;">967.6 km</div>
<div class="t" style="left:906.00px;top:554.33px;font-size:10.0px;color:#919191;letter-spacing:0.18px;">24 h. 31 m</div>
<div class="t" style="left:981.30px;top:554.33px;font-size:10.0px;color:#919191;">-</div>
<div class="t" style="left:1079.10px;top:554.33px;font-size:10.0px;color:#919191;">-</div>
<div class="t" style="left:1171.10px;top:554.33px;font-size:10.0px;color:#919191;">-</div>
<div class="t" style="left:1275.60px;top:554.33px;font-size:10.0px;color:#919191;">-</div>
<div class="t" style="left:1368.20px;top:554.33px;font-size:10.0px;color:#919191;letter-spacing:0.3px;">71</div>
<div class="t" style="left:1435.90px;top:554.26px;font-size:10.2px;color:#919191;letter-spacing:0.35px;">40 km/h</div>
<div class="r" style="left:65.00px;top:583.45px;width:1506.50px;height:41.75px;background:#fff;border-top:1px solid #e2e2e2;box-sizing:border-box;"></div>
<div class="t" style="left:77.60px;top:595.74px;font-size:11px;color:#919191;">4</div>
<div class="r" style="left:97.10px;top:592.25px;width:66.60px;height:25.60px;background:#4f8f0b;border-radius:3px;"></div>
<div class="t" style="left:107.00px;top:594.45px;font-size:17.6px;color:#ffffff;">A</div>
<div class="t" style="left:128.10px;top:595.51px;font-size:10.8px;color:#f3f8e6;-webkit-text-stroke:0.3px #f3f8e6;">90.46</div>
<div class="t" style="left:185.80px;top:595.10px;font-size:11.1px;color:#3d8bcb;">TKSY-83</div>
<div class="t" style="left:285.80px;top:596.24px;font-size:10.4px;color:#919191;">-</div>
<div class="t" style="left:373.30px;top:595.12px;font-size:17.1px;color:#ef6c3a;">E<span style="font-size:10.0px;color:#919191;margin-left:4px;letter-spacing:0.3px;position:relative;top:-1.5px;">84.14%</span></div>
<div class="t" style="left:449.30px;top:595.12px;font-size:17.1px;color:#ef6c3a;">E<span style="font-size:10.0px;color:#919191;margin-left:4px;letter-spacing:0.3px;position:relative;top:-1.5px;">13.8%</span></div>
<div class="t" style="left:532.00px;top:596.08px;font-size:10.0px;color:#919191;">-</div>
<div class="t" style="left:584.70px;top:595.12px;font-size:17.1px;color:#5a9b1c;">A<span style="font-size:10.0px;color:#919191;margin-left:4px;letter-spacing:0.3px;position:relative;top:-1.5px;">0x</span></div>
<div class="t" style="left:660.60px;top:595.12px;font-size:17.1px;color:#5a9b1c;">A<span style="font-size:10.0px;color:#919191;margin-left:4px;letter-spacing:0.3px;position:relative;top:-1.5px;">0x</span></div>
<div class="t" style="left:747.80px;top:595.12px;font-size:17.1px;color:#5a9b1c;">A<span style="font-size:10.0px;color:#919191;margin-left:4px;letter-spacing:0.3px;position:relative;top:-1.5px;">7x</span></div>
<svg class="r" style="left:821.00px;top:598.25px;" width="13" height="13" viewBox="0 0 13 13"><g fill="none" stroke="#9a9c9e"><rect x="3.2" y="3.2" width="6.6" height="6.6" rx="1.2" stroke-width="1.4"/></g><g fill="#9a9c9e"><rect x="5" y="0.6" width="0.7" height="1.4"/><rect x="7.3" y="0.6" width="0.7" height="1.4"/><rect x="5" y="11" width="0.7" height="1.4"/><rect x="7.3" y="11" width="0.7" height="1.4"/><rect x="0.6" y="5" width="1.4" height="0.7"/><rect x="0.6" y="7.3" width="1.4" height="0.7"/><rect x="11" y="5" width="1.4" height="0.7"/><rect x="11" y="7.3" width="1.4" height="0.7"/></g></svg>
<div class="t" style="left:839.30px;top:596.08px;font-size:10.0px;color:#919191;letter-spacing:0.3px;">1263.0 km</div>
<div class="t" style="left:906.00px;top:596.08px;font-size:10.0px;color:#919191;letter-spacing:0.18px;">30 h. 47 m</div>
<svg class="r" style="left:976.30px;top:598.25px;" width="13" height="13" viewBox="0 0 13 13"><g fill="none" stroke="#9a9c9e"><rect x="3.2" y="3.2" width="6.6" height="6.6" rx="1.2" stroke-width="1.4"/></g><g fill="#9a9c9e"><rect x="5" y="0.6" width="0.7" height="1.4"/><rect x="7.3" y="0.6" width="0.7" height="1.4"/><rect x="5" y="11" width="0.7" height="1.4"/><rect x="7.3" y="11" width="0.7" height="1.4"/><rect x="0.6" y="5" width="1.4" height="0.7"/><rect x="0.6" y="7.3" width="1.4" height="0.7"/><rect x="11" y="5" width="1.4" height="0.7"/><rect x="11" y="7.3" width="1.4" height="0.7"/></g></svg>
<div class="t" style="left:994.80px;top:596.08px;font-size:10.0px;color:#919191;letter-spacing:0.3px;">14.3 km/l</div>
<svg class="r" style="left:1075.30px;top:598.25px;" width="13" height="13" viewBox="0 0 13 13"><g fill="none" stroke="#9a9c9e"><rect x="3.2" y="3.2" width="6.6" height="6.6" rx="1.2" stroke-width="1.4"/></g><g fill="#9a9c9e"><rect x="5" y="0.6" width="0.7" height="1.4"/><rect x="7.3" y="0.6" width="0.7" height="1.4"/><rect x="5" y="11" width="0.7" height="1.4"/><rect x="7.3" y="11" width="0.7" height="1.4"/><rect x="0.6" y="5" width="1.4" height="0.7"/><rect x="0.6" y="7.3" width="1.4" height="0.7"/><rect x="11" y="5" width="1.4" height="0.7"/><rect x="11" y="7.3" width="1.4" height="0.7"/></g></svg>
<div class="t" style="left:1093.80px;top:596.08px;font-size:10.0px;color:#919191;letter-spacing:0.3px;">88.0 l</div>
<svg class="r" style="left:1167.50px;top:598.25px;" width="13" height="13" viewBox="0 0 13 13"><g fill="none" stroke="#9a9c9e"><rect x="3.2" y="3.2" width="6.6" height="6.6" rx="1.2" stroke-width="1.4"/></g><g fill="#9a9c9e"><rect x="5" y="0.6" width="0.7" height="1.4"/><rect x="7.3" y="0.6" width="0.7" height="1.4"/><rect x="5" y="11" width="0.7" height="1.4"/><rect x="7.3" y="11" width="0.7" height="1.4"/><rect x="0.6" y="5" width="1.4" height="0.7"/><rect x="0.6" y="7.3" width="1.4" height="0.7"/><rect x="11" y="5" width="1.4" height="0.7"/><rect x="11" y="7.3" width="1.4" height="0.7"/></g></svg>
<div class="t" style="left:1186.00px;top:596.08px;font-size:10.0px;color:#919191;letter-spacing:0.3px;">11.0 l</div>
<div class="t" style="left:1275.60px;top:596.08px;font-size:10.0px;color:#919191;">-</div>
<div class="t" style="left:1368.20px;top:596.08px;font-size:10.0px;color:#919191;letter-spacing:0.3px;">67</div>
<div class="t" style="left:1435.90px;top:596.01px;font-size:10.2px;color:#919191;letter-spacing:0.35px;">41 km/h</div>
<div class="r" style="left:65.00px;top:625.20px;width:1506.50px;height:41.75px;background:#f4f4f4;border-top:1px solid #e2e2e2;box-sizing:border-box;"></div>
<div class="t" style="left:77.60px;top:637.49px;font-size:11px;color:#919191;">5</div>
<div class="r" style="left:97.10px;top:634.00px;width:66.60px;height:25.60px;background:#66b10a;border-radius:3px;"></div>
<div class="t" style="left:107.00px;top:636.20px;font-size:17.6px;color:#ffffff;">B</div>
<div class="t" style="left:128.10px;top:637.26px;font-size:10.8px;color:#f3f8e6;-webkit-text-stroke:0.3px #f3f8e6;">86.61</div>
<div class="t" style="left:185.80px;top:636.85px;font-size:11.1px;color:#3d8bcb;">LDGH47 JIMI</div>
<div class="t" style="left:285.80px;top:637.99px;font-size:10.4px;color:#919191;letter-spacing:0.25px;">2 conductores</div>
<div class="t" style="left:373.30px;top:636.87px;font-size:17.1px;color:#5a9b1c;">A<span style="font-size:10.0px;color:#919191;margin-left:4px;letter-spacing:0.3px;position:relative;top:-1.5px;">100%</span></div>
<div class="t" style="left:449.30px;top:636.87px;font-size:17.1px;color:#5a9b1c;">A<span style="font-size:10.0px;color:#919191;margin-left:4px;letter-spacing:0.3px;position:relative;top:-1.5px;">0%</span></div>
<div class="t" style="left:532.00px;top:637.83px;font-size:10.0px;color:#919191;">-</div>
<div class="t" style="left:584.70px;top:636.87px;font-size:17.1px;color:#c6cc2a;">C<span style="font-size:10.0px;color:#919191;margin-left:4px;letter-spacing:0.3px;position:relative;top:-1.5px;">17x</span></div>
<div class="t" style="left:660.60px;top:636.87px;font-size:17.1px;color:#5a9b1c;">A<span style="font-size:10.0px;color:#919191;margin-left:4px;letter-spacing:0.3px;position:relative;top:-1.5px;">4x</span></div>
<div class="t" style="left:747.80px;top:636.87px;font-size:17.1px;color:#5a9b1c;">A<span style="font-size:10.0px;color:#919191;margin-left:4px;letter-spacing:0.3px;position:relative;top:-1.5px;">0x</span></div>
<svg class="r" style="left:823.00px;top:640.80px;" width="11" height="12" viewBox="0 0 11 12"><path d="M9.9 1.0 L0.5 5.0 L5.5 5.6 L5.3 11.2 Z" fill="#9b9d9f"/></svg>
<div class="t" style="left:839.30px;top:637.83px;font-size:10.0px;color:#919191;letter-spacing:0.3px;">863.1 km</div>
<div class="t" style="left:906.00px;top:637.83px;font-size:10.0px;color:#919191;letter-spacing:0.18px;">18 h. 52 m</div>
<div class="t" style="left:981.30px;top:637.83px;font-size:10.0px;color:#919191;">-</div>
<div class="t" style="left:1079.10px;top:637.83px;font-size:10.0px;color:#919191;">-</div>
<div class="t" style="left:1171.10px;top:637.83px;font-size:10.0px;color:#919191;">-</div>
<div class="t" style="left:1275.60px;top:637.83px;font-size:10.0px;color:#919191;">-</div>
<div class="t" style="left:1368.20px;top:637.83px;font-size:10.0px;color:#919191;letter-spacing:0.3px;">77</div>
<div class="t" style="left:1435.90px;top:637.76px;font-size:10.2px;color:#919191;letter-spacing:0.35px;">46 km/h</div>
<div class="r" style="left:65.00px;top:666.95px;width:1506.50px;height:41.75px;background:#fff;border-top:1px solid #e2e2e2;box-sizing:border-box;"></div>
<div class="t" style="left:77.60px;top:679.24px;font-size:11px;color:#919191;">6</div>
<div class="r" style="left:97.10px;top:675.75px;width:66.60px;height:25.60px;background:#d4d30a;border-radius:3px;"></div>
<div class="t" style="left:107.00px;top:677.95px;font-size:17.6px;color:#fffde0;">C</div>
<div class="t" style="left:128.10px;top:679.01px;font-size:10.8px;color:#fffde8;-webkit-text-stroke:0.3px #fffde8;">74.46</div>
<div class="t" style="left:185.80px;top:678.60px;font-size:11.1px;color:#3d8bcb;">TKSY83 CAMARA</div>
<div class="t" style="left:285.80px;top:679.74px;font-size:10.4px;color:#919191;">-</div>
<div class="t" style="left:373.30px;top:678.62px;font-size:17.1px;color:#5a9b1c;">A<span style="font-size:10.0px;color:#919191;margin-left:4px;letter-spacing:0.3px;position:relative;top:-1.5px;">98.32%</span></div>
<div class="t" style="left:449.30px;top:678.62px;font-size:17.1px;color:#c6cc2a;">C<span style="font-size:10.0px;color:#919191;margin-left:4px;letter-spacing:0.3px;position:relative;top:-1.5px;">7.88%</span></div>
<div class="t" style="left:532.00px;top:679.58px;font-size:10.0px;color:#919191;">-</div>
<div class="t" style="left:584.70px;top:678.62px;font-size:17.1px;color:#7cb52e;">B<span style="font-size:10.0px;color:#919191;margin-left:4px;letter-spacing:0.3px;position:relative;top:-1.5px;">10x</span></div>
<div class="t" style="left:660.60px;top:678.62px;font-size:17.1px;color:#7cb52e;">B<span style="font-size:10.0px;color:#919191;margin-left:4px;letter-spacing:0.3px;position:relative;top:-1.5px;">8x</span></div>
<div class="t" style="left:747.80px;top:678.62px;font-size:17.1px;color:#f0a532;">D<span style="font-size:10.0px;color:#919191;margin-left:4px;letter-spacing:0.3px;position:relative;top:-1.5px;">36x</span></div>
<svg class="r" style="left:823.00px;top:682.55px;" width="11" height="12" viewBox="0 0 11 12"><path d="M9.9 1.0 L0.5 5.0 L5.5 5.6 L5.3 11.2 Z" fill="#9b9d9f"/></svg>
<div class="t" style="left:839.30px;top:679.58px;font-size:10.0px;color:#919191;letter-spacing:0.3px;">1255.7 km</div>
<div class="t" style="left:906.00px;top:679.58px;font-size:10.0px;color:#919191;letter-spacing:0.18px;">30 h. 24 m</div>
<div class="t" style="left:981.30px;top:679.58px;font-size:10.0px;color:#919191;">-</div>
<div class="t" style="left:1079.10px;top:679.58px;font-size:10.0px;color:#919191;">-</div>
<div class="t" style="left:1171.10px;top:679.58px;font-size:10.0px;color:#919191;">-</div>
<div class="t" style="left:1275.60px;top:679.58px;font-size:10.0px;color:#919191;">-</div>
<div class="t" style="left:1368.20px;top:679.58px;font-size:10.0px;color:#919191;letter-spacing:0.3px;">62</div>
<div class="t" style="left:1435.90px;top:679.51px;font-size:10.2px;color:#919191;letter-spacing:0.35px;">41 km/h</div>
<div class="r" style="left:65.00px;top:708.70px;width:1506.50px;height:41.75px;background:#f4f4f4;border-top:1px solid #e2e2e2;box-sizing:border-box;"></div>
<div class="t" style="left:77.60px;top:720.99px;font-size:11px;color:#919191;">7</div>
<div class="r" style="left:97.10px;top:717.50px;width:66.60px;height:25.60px;background:#d4d30a;border-radius:3px;"></div>
<div class="t" style="left:107.00px;top:719.70px;font-size:17.6px;color:#fffde0;">C</div>
<div class="t" style="left:128.10px;top:720.76px;font-size:10.8px;color:#fffde8;-webkit-text-stroke:0.3px #fffde8;">66.2</div>
<div class="t" style="left:185.80px;top:720.35px;font-size:11.1px;color:#3d8bcb;">LDGH31 JIMI</div>
<div class="t" style="left:285.80px;top:721.49px;font-size:10.4px;color:#919191;letter-spacing:0.25px;">2 conductores</div>
<div class="t" style="left:373.30px;top:720.37px;font-size:17.1px;color:#f0a532;">D<span style="font-size:10.0px;color:#919191;margin-left:4px;letter-spacing:0.3px;position:relative;top:-1.5px;">91.05%</span></div>
<div class="t" style="left:449.30px;top:720.37px;font-size:17.1px;color:#b8232a;">G<span style="font-size:10.0px;color:#919191;margin-left:4px;letter-spacing:0.3px;position:relative;top:-1.5px;">100%</span></div>
<div class="t" style="left:532.00px;top:721.33px;font-size:10.0px;color:#919191;">-</div>
<div class="t" style="left:584.70px;top:720.37px;font-size:17.1px;color:#f0a532;">D<span style="font-size:10.0px;color:#919191;margin-left:4px;letter-spacing:0.3px;position:relative;top:-1.5px;">30x</span></div>
<div class="t" style="left:660.60px;top:720.37px;font-size:17.1px;color:#c6cc2a;">C<span style="font-size:10.0px;color:#919191;margin-left:4px;letter-spacing:0.3px;position:relative;top:-1.5px;">12x</span></div>
<div class="t" style="left:747.80px;top:720.37px;font-size:17.1px;color:#5a9b1c;">A<span style="font-size:10.0px;color:#919191;margin-left:4px;letter-spacing:0.3px;position:relative;top:-1.5px;">1x</span></div>
<svg class="r" style="left:823.00px;top:724.30px;" width="11" height="12" viewBox="0 0 11 12"><path d="M9.9 1.0 L0.5 5.0 L5.5 5.6 L5.3 11.2 Z" fill="#9b9d9f"/></svg>
<div class="t" style="left:839.30px;top:721.33px;font-size:10.0px;color:#919191;letter-spacing:0.3px;">875.2 km</div>
<div class="t" style="left:906.00px;top:721.33px;font-size:10.0px;color:#919191;letter-spacing:0.18px;">23 h. 40 m</div>
<div class="t" style="left:981.30px;top:721.33px;font-size:10.0px;color:#919191;">-</div>
<div class="t" style="left:1079.10px;top:721.33px;font-size:10.0px;color:#919191;">-</div>
<div class="t" style="left:1171.10px;top:721.33px;font-size:10.0px;color:#919191;">-</div>
<div class="t" style="left:1275.60px;top:721.33px;font-size:10.0px;color:#919191;">-</div>
<div class="t" style="left:1368.20px;top:721.33px;font-size:10.0px;color:#919191;letter-spacing:0.3px;">82</div>
<div class="t" style="left:1435.90px;top:721.26px;font-size:10.2px;color:#919191;letter-spacing:0.35px;">37 km/h</div>
<div class="r" style="left:65.00px;top:750.45px;width:1506.50px;height:41.75px;background:#fff;border-top:1px solid #e2e2e2;box-sizing:border-box;"></div>
<div class="t" style="left:77.60px;top:762.74px;font-size:11px;color:#919191;">8</div>
<div class="r" style="left:97.10px;top:759.25px;width:66.60px;height:25.60px;background:#d4d30a;border-radius:3px;"></div>
<div class="t" style="left:107.00px;top:761.45px;font-size:17.6px;color:#fffde0;">C</div>
<div class="t" style="left:128.10px;top:762.51px;font-size:10.8px;color:#fffde8;-webkit-text-stroke:0.3px #fffde8;">60.33</div>
<div class="t" style="left:185.80px;top:762.10px;font-size:11.1px;color:#3d8bcb;">SVCK-33</div>
<div class="t" style="left:285.80px;top:763.24px;font-size:10.4px;color:#919191;">Luigi Ruales</div>
<div class="t" style="left:373.30px;top:762.12px;font-size:17.1px;color:#e8393c;">F<span style="font-size:10.0px;color:#919191;margin-left:4px;letter-spacing:0.3px;position:relative;top:-1.5px;">76.77%</span></div>
<div class="t" style="left:449.30px;top:762.12px;font-size:17.1px;color:#b8232a;">G<span style="font-size:10.0px;color:#919191;margin-left:4px;letter-spacing:0.3px;position:relative;top:-1.5px;">90.69%</span></div>
<div class="t" style="left:532.00px;top:763.08px;font-size:10.0px;color:#919191;">-</div>
<div class="t" style="left:584.70px;top:762.12px;font-size:17.1px;color:#c6cc2a;">C<span style="font-size:10.0px;color:#919191;margin-left:4px;letter-spacing:0.3px;position:relative;top:-1.5px;">4x</span></div>
<div class="t" style="left:660.60px;top:762.12px;font-size:17.1px;color:#7cb52e;">B<span style="font-size:10.0px;color:#919191;margin-left:4px;letter-spacing:0.3px;position:relative;top:-1.5px;">3x</span></div>
<div class="t" style="left:747.80px;top:762.12px;font-size:17.1px;color:#f0a532;">D<span style="font-size:10.0px;color:#919191;margin-left:4px;letter-spacing:0.3px;position:relative;top:-1.5px;">7x</span></div>
<svg class="r" style="left:823.00px;top:766.05px;" width="11" height="12" viewBox="0 0 11 12"><path d="M9.9 1.0 L0.5 5.0 L5.5 5.6 L5.3 11.2 Z" fill="#9b9d9f"/></svg>
<div class="t" style="left:839.30px;top:763.08px;font-size:10.0px;color:#919191;letter-spacing:0.3px;">392.7 km</div>
<div class="t" style="left:906.00px;top:763.08px;font-size:10.0px;color:#919191;letter-spacing:0.18px;">6 h. 19 m</div>
<div class="t" style="left:981.30px;top:763.08px;font-size:10.0px;color:#919191;">-</div>
<div class="t" style="left:1079.10px;top:763.08px;font-size:10.0px;color:#919191;">-</div>
<div class="t" style="left:1171.10px;top:763.08px;font-size:10.0px;color:#919191;">-</div>
<div class="t" style="left:1275.60px;top:763.08px;font-size:10.0px;color:#919191;">-</div>
<div class="t" style="left:1368.20px;top:763.08px;font-size:10.0px;color:#919191;letter-spacing:0.3px;">29</div>
<div class="t" style="left:1435.90px;top:763.01px;font-size:10.2px;color:#919191;letter-spacing:0.35px;">62 km/h</div>
<div class="r" style="left:1571.50px;top:378.00px;width:1.00px;height:414.00px;background:#e4e4e4;"></div>
</body></html>
